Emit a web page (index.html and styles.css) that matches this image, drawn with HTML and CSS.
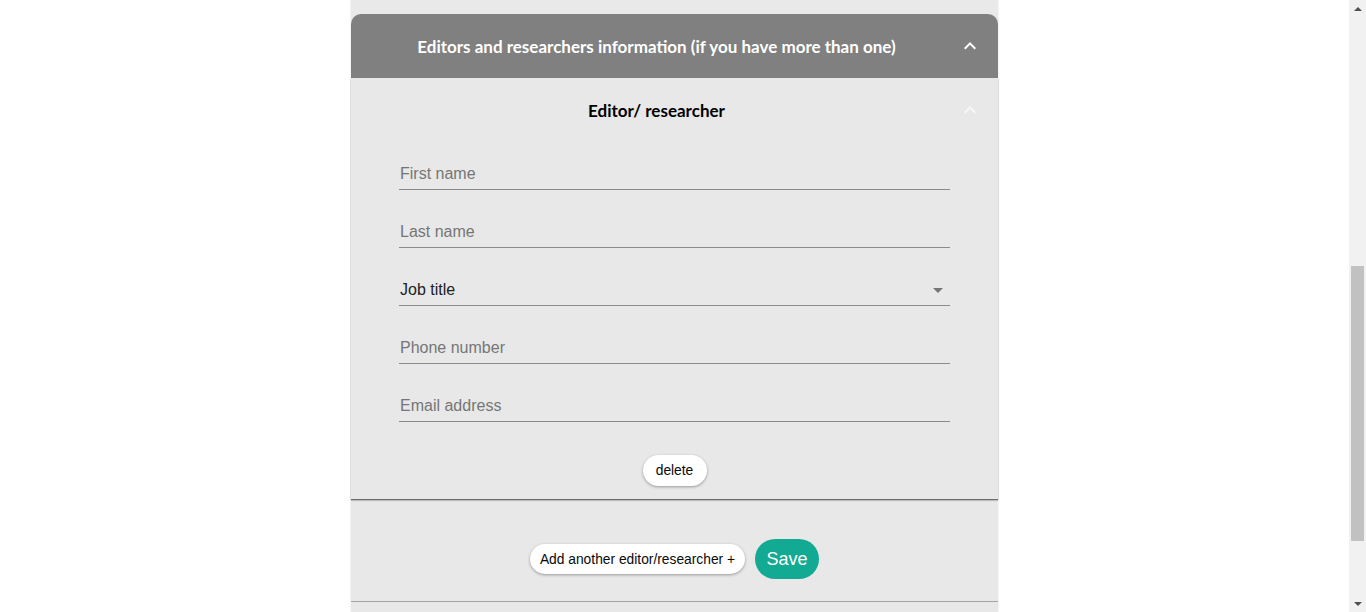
FILE: index.html
```html
<!DOCTYPE html>
<html lang="en">
<head>
<meta charset="utf-8">
<title>Editors and researchers</title>
<link rel="stylesheet" href="styles.css">
</head>
<body>
<div class="page">
  <main class="viewport">
    <div class="column">
      <div class="prev"></div>
      <section class="accordion">
        <header class="summary summary-dark">
          <h2 class="summary-title">Editors and researchers information (if you have more than one)</h2>
          <span class="expand-icon">
            <svg viewBox="0 0 24 24" width="24" height="24"><path d="M12 8l-6 6 1.41 1.41L12 10.83l4.59 4.58L18 14z" fill="currentColor"/></svg>
          </span>
        </header>
        <div class="details">
          <div class="inner">
            <header class="summary summary-light">
              <h3 class="summary-title inner-title">Editor/ researcher</h3>
              <span class="expand-icon faint">
                <svg viewBox="0 0 24 24" width="24" height="24"><path d="M12 8l-6 6 1.41 1.41L12 10.83l4.59 4.58L18 14z" fill="currentColor"/></svg>
              </span>
            </header>
            <div class="fields">
              <div class="field"><span class="placeholder">First name</span></div>
              <div class="field"><span class="placeholder">Last name</span></div>
              <div class="field select"><span class="value">Job title</span>
                <svg class="caret" viewBox="0 0 24 24" width="24" height="24"><path d="M7 10l5 5 5-5z" fill="currentColor"/></svg>
              </div>
              <div class="field"><span class="placeholder">Phone number</span></div>
              <div class="field"><span class="placeholder">Email address</span></div>
            </div>
            <div class="delete-row"><button class="pill btn-delete">delete</button></div>
          </div>
          <div class="actions">
            <button class="pill btn-add">Add another editor/researcher +</button>
            <button class="btn-save">Save</button>
          </div>
        </div>
      </section>
      <div class="next"></div>
    </div>
  </main>
  <div class="scrollbar">
    <div class="sb-btn"><span class="arrow-up"></span></div>
    <div class="sb-track"><div class="sb-thumb"></div></div>
    <div class="sb-btn"><span class="arrow-down"></span></div>
  </div>
</div>
</body>
</html>
```

FILE: styles.css
```css
* { box-sizing: border-box; }
html, body { margin: 0; padding: 0; height: 100%; }
body {
  background: #ffffff;
  font-family: "Liberation Sans", Arial, sans-serif;
  overflow: hidden;
}
.page {
  display: flex;
  height: 612px;
  width: 1366px;
}
.viewport {
  flex: 1;
  display: flex;
  justify-content: center;
  overflow: hidden;
}
.column {
  width: 647px;
  display: flex;
  flex-direction: column;
  background: #e8e8e8;
  box-shadow: 0 0 2px rgba(0,0,0,0.12);
}
.prev {
  height: 14px;
  background: #e9e9e9;
  flex: none;
}
.accordion { flex: none; }
.summary {
  display: flex;
  align-items: center;
  height: 64px;
  padding: 0 16px;
}
.summary-dark {
  background: #808080;
  border-radius: 10px 10px 0 0;
  color: #ffffff;
}
.summary-title {
  flex: 1;
  margin: 0;
  padding-top: 2px;
  text-align: center;
  font-family: "Lato", "Open Sans", sans-serif;
  font-weight: 700;
  font-size: 17px;
  line-height: 20px;
}
.inner-title { color: #000000; }
.expand-icon {
  width: 48px;
  height: 48px;
  padding: 12px;
  margin-right: -12px;
  display: flex;
  color: #ffffff;
}
.expand-icon.faint { color: #f7f7f7; }
.inner {
  background: #e8e8e8;
  box-shadow: 0 1px 1px rgba(0,0,0,0.45), 0 2px 1px rgba(0,0,0,0.12);
  padding-bottom: 13px;
  position: relative;
}
.fields {
  padding: 18px 48px 0;
  display: flex;
  flex-direction: column;
  gap: 28px;
}
.field {
  height: 30px;
  padding: 4px 0 6px 1px;
  border-bottom: 1px solid #8b8b8b;
  font-size: 16px;
  line-height: 19px;
  display: flex;
  align-items: center;
}
.placeholder { color: #767676; }
.value { color: #222222; flex: 1; }
.caret {
  color: #757575;
  flex: none;
}
.delete-row {
  display: flex;
  justify-content: center;
  margin-top: 33px;
}
.pill {
  background: #ffffff;
  border: none;
  border-radius: 16px;
  box-shadow: 0 1px 3px rgba(0,0,0,0.35);
  font-family: "Liberation Sans", Arial, sans-serif;
  font-size: 13.8px;
  color: #0a0a0a;
  padding: 0;
}
.btn-delete {
  width: 64px;
  height: 31px;
}
.actions {
  display: flex;
  justify-content: center;
  align-items: center;
  gap: 10px;
  padding: 40px 0 22px;
}
.btn-add {
  width: 215px;
  height: 30px;
}
.btn-save {
  width: 64px;
  height: 40px;
  border: none;
  border-radius: 20px;
  background: #13aa93;
  color: #ffffff;
  font-family: "Liberation Sans", Arial, sans-serif;
  font-size: 18px;
  padding: 0;
}
.next {
  flex: 1;
  border-top: 1px solid #a4a4a4;
  background: #e8e8e8;
}
.scrollbar {
  width: 17px;
  flex: none;
  background: #f1f1f1;
  display: flex;
  flex-direction: column;
}
.sb-btn {
  height: 17px;
  display: flex;
  align-items: center;
  justify-content: center;
}
.arrow-up {
  width: 0; height: 0;
  border-left: 4px solid transparent;
  border-right: 4px solid transparent;
  border-bottom: 4px solid #505050;
}
.arrow-down {
  width: 0; height: 0;
  border-left: 4px solid transparent;
  border-right: 4px solid transparent;
  border-top: 4px solid #505050;
}
.sb-track {
  flex: 1;
  padding: 249px 2px 0;
}
.sb-thumb {
  height: 275px;
  background: #c1c1c1;
}
```
